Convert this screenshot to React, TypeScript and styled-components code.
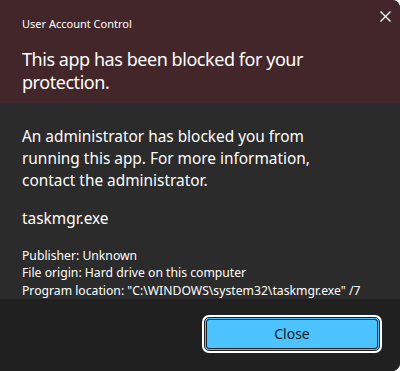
import React from "react";
import styled, { createGlobalStyle } from "styled-components";

const Global = createGlobalStyle`
  html, body { margin: 0; padding: 0; background: #ffffff; }
  body { font-family: "Segoe UI", "Noto Sans", "Open Sans", sans-serif; }
`;

const Dialog = styled.div`
  width: 400px;
  height: 371px;
  display: flex;
  flex-direction: column;
  border-radius: 0 8px 8px 0;
  overflow: hidden;
  background: #2b2b2b;
  color: #ffffff;
`;

const Header = styled.div`
  position: relative;
  background: #43262a;
  height: 103px;
  box-sizing: border-box;
  padding: 16px 40px 0 22px;
`;

const Caption = styled.div`
  font-size: 11px;
  line-height: 16px;
  color: #ffffff;
`;

const Title = styled.h1`
  margin: 16px 0 0;
  font-size: 18px;
  letter-spacing: -0.45px;
  font-weight: 400;
  line-height: 23px;
`;

const CloseX = styled.button`
  position: absolute;
  top: 8px;
  right: 7px;
  width: 16px;
  height: 16px;
  padding: 0;
  border: 0;
  background: transparent;
  display: flex;
  align-items: center;
  justify-content: center;
`;

const Body = styled.div`
  flex: 1;
  padding: 23px 0 0 22px;
`;

const Message = styled.p`
  margin: 0;
  max-width: 305px;
  font-size: 15.4px;
  line-height: 22px;
`;

const AppName = styled.p`
  margin: 16px 0 0;
  font-size: 15.4px;
  line-height: 22px;
`;

const Details = styled.div`
  margin-top: 17px;
  font-size: 12.2px;
  line-height: 17.5px;
`;

const Footer = styled.div`
  height: 72px;
  background: #202020;
  display: flex;
  justify-content: flex-end;
  align-items: flex-start;
  padding: 18px 20px 0 0;
  box-sizing: border-box;
`;

const PrimaryButton = styled.button`
  width: 176px;
  height: 34px;
  box-sizing: border-box;
  background: #4cc2ff;
  color: #0b1a22;
  border: 1px solid #202020;
  border-radius: 5px;
  box-shadow: 0 0 0 2px #ffffff;
  font-family: "Segoe UI", "Noto Sans", "Open Sans", sans-serif;
  font-size: 14px;
  line-height: 20px;
  padding: 0;
  outline: 1px solid #202020;
  outline-offset: -3px;
`;

export default function App() {
  return (
    <>
      <Global />
      <Dialog>
        <Header>
          <Caption>User Account Control</Caption>
          <Title>This app has been blocked for your protection.</Title>
          <CloseX aria-label="Close">
            <svg width="11" height="11" viewBox="0 0 11 11">
              <path d="M0.5 0.5 L10.5 10.5 M10.5 0.5 L0.5 10.5" stroke="#ffffff" strokeWidth="1.4" fill="none" />
            </svg>
          </CloseX>
        </Header>
        <Body>
          <Message>
            An administrator has blocked you from running this app. For more information, contact the administrator.
          </Message>
          <AppName>taskmgr.exe</AppName>
          <Details>
            <div>Publisher: Unknown</div>
            <div>File origin: Hard drive on this computer</div>
            <div>Program location: "C:\WINDOWS\system32\taskmgr.exe" /7</div>
          </Details>
        </Body>
        <Footer>
          <PrimaryButton>Close</PrimaryButton>
        </Footer>
      </Dialog>
    </>
  );
}
